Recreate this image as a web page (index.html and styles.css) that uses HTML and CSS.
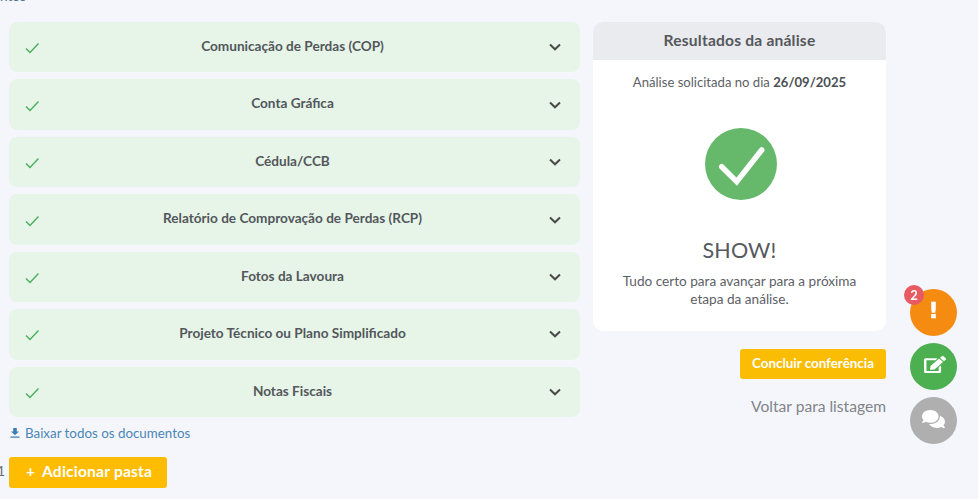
FILE: index.html
```html
<!DOCTYPE html>
<html lang="pt-BR">
<head>
<meta charset="utf-8">
<title>Resultados da análise</title>
<link rel="stylesheet" href="styles.css">
</head>
<body>
<p class="cut-text">ntos</p>
<main class="layout">
  <section class="docs">
    <div class="doc-list">
      <div class="doc-row"><svg class="tick" viewBox="0 0 14 12"><path d="M1 6.5 5 10.500 13.500 1.500"/></svg><span class="doc-name">Comunicação de Perdas (COP)</span><svg class="chev" viewBox="0 0 12 8"><path d="M1 1.500 6 6.300 11 1.500"/></svg></div>
      <div class="doc-row"><svg class="tick" viewBox="0 0 14 12"><path d="M1 6.5 5 10.500 13.500 1.500"/></svg><span class="doc-name">Conta Gráfica</span><svg class="chev" viewBox="0 0 12 8"><path d="M1 1.500 6 6.300 11 1.500"/></svg></div>
      <div class="doc-row"><svg class="tick" viewBox="0 0 14 12"><path d="M1 6.5 5 10.500 13.500 1.500"/></svg><span class="doc-name">Cédula/CCB</span><svg class="chev" viewBox="0 0 12 8"><path d="M1 1.500 6 6.300 11 1.500"/></svg></div>
      <div class="doc-row"><svg class="tick" viewBox="0 0 14 12"><path d="M1 6.5 5 10.500 13.500 1.500"/></svg><span class="doc-name">Relatório de Comprovação de Perdas (RCP)</span><svg class="chev" viewBox="0 0 12 8"><path d="M1 1.500 6 6.300 11 1.500"/></svg></div>
      <div class="doc-row"><svg class="tick" viewBox="0 0 14 12"><path d="M1 6.5 5 10.500 13.500 1.500"/></svg><span class="doc-name">Fotos da Lavoura</span><svg class="chev" viewBox="0 0 12 8"><path d="M1 1.500 6 6.300 11 1.500"/></svg></div>
      <div class="doc-row"><svg class="tick" viewBox="0 0 14 12"><path d="M1 6.5 5 10.500 13.500 1.500"/></svg><span class="doc-name">Projeto Técnico ou Plano Simplificado</span><svg class="chev" viewBox="0 0 12 8"><path d="M1 1.500 6 6.300 11 1.500"/></svg></div>
      <div class="doc-row"><svg class="tick" viewBox="0 0 14 12"><path d="M1 6.5 5 10.500 13.500 1.500"/></svg><span class="doc-name">Notas Fiscais</span><svg class="chev" viewBox="0 0 12 8"><path d="M1 1.500 6 6.300 11 1.500"/></svg></div>
    </div>
    <a class="download" href="#"><svg class="dl-icon" viewBox="0 0 10 10"><path d="M3.200 0H6.800V3.500H9L5 7.300 1 3.500H3.200ZM.500 8.500H9.500V9.800H.500Z"/></svg>Baixar todos os documentos</a>
    <div class="add-row"><span class="count">1</span><button class="add-btn"><span class="plus">+</span>Adicionar pasta</button></div>
  </section>
  <aside class="side">
    <div class="card">
      <h2 class="card-head">Resultados da análise</h2>
      <div class="card-body">
        <p class="req">Análise solicitada no dia <b>26/09/2025</b></p>
        <svg class="big-check" viewBox="0 0 72 72"><circle cx="36" cy="36" r="36"/><path d="M16.700 38.700 31.700 53.700 56.700 22"/></svg>
        <h3 class="show">SHOW!</h3>
        <p class="msg">Tudo certo para avançar para a próxima etapa da análise.</p>
      </div>
    </div>
    <button class="finish">Concluir conferência</button>
    <a class="back" href="#">Voltar para listagem</a>
  </aside>
</main>
<div class="fabs">
  <div class="fab fab-orange"><span class="badge">2</span><span class="bang">!</span></div>
  <div class="fab fab-green"><svg class="edit-icon" viewBox="0 0 576 512" preserveAspectRatio="none"><path d="M402.600 83.200l90.200 90.200c3.800 3.800 3.800 10 0 13.800L274.400 405.600l-92.800 10.300c-12.400 1.400-22.900-9.100-21.500-21.500l10.300-92.800L388.800 83.200c3.800-3.800 10-3.800 13.800 0zm162-22.900l-48.800-48.800c-15.200-15.200-39.900-15.200-55.200 0l-35.400 35.400c-3.800 3.800-3.800 10 0 13.800l90.200 90.200c3.800 3.800 10 3.800 13.800 0l35.400-35.400c15.200-15.300 15.200-40 0-55.200zM384 346.200V448H64V128h229.800c3.200 0 6.200-1.300 8.500-3.500l40-40c7.600-7.600 2.200-20.500-8.500-20.500H48C21.500 64 0 85.500 0 112v352c0 26.500 21.500 48 48 48h352c26.500 0 48-21.500 48-48V306.200c0-10.700-12.900-16-20.500-8.500l-40 40c-2.200 2.300-3.500 5.300-3.500 8.500z"/></svg></div>
  <div class="fab fab-grey"><svg class="chat-icon" viewBox="0 32 576 448"><path d="M416 192c0-88.400-93.100-160-208-160S0 103.600 0 192c0 34.300 14.100 65.900 38 92-13.400 30.200-35.500 54.200-35.800 54.500-2.200 2.300-2.800 5.700-1.500 8.700S4.800 352 8 352c36.600 0 66.900-12.300 88.700-25 32.200 15.700 70.300 25 111.300 25 114.900 0 208-71.600 208-160zm122 220c23.900-26 38-57.700 38-92 0-66.900-53.500-124.200-129.300-148.100.9 6.600 1.300 13.300 1.300 20.100 0 105.900-107.700 192-240 192-10.800 0-21.300-.8-31.700-1.900C207.800 439.600 281.800 480 368 480c41 0 79.100-9.200 111.300-25 21.800 12.700 52.100 25 88.700 25 3.200 0 6.100-1.900 7.300-4.800 1.300-2.900.7-6.300-1.500-8.700-.3-.3-22.400-24.200-35.800-54.500z"/></svg></div>
</div>
</body>
</html>
```
FILE: styles.css
```css
* { box-sizing: border-box; }
html, body { height: 100%; }
body {
  margin: 0;
  height: 499px;
  overflow: hidden;
  background: #f5f6fb;
  font-family: "Lato", "Open Sans", sans-serif;
  color: #4f5358;
}
.cut-text {
  position: absolute;
  top: -12px;
  left: 0;
  margin: 0;
  font-size: 13.500px;
  color: #4a6f8f;
}
.layout {
  display: flex;
  gap: 13px;
  padding: 22px 0 0 9px;
  align-items: flex-start;
}
.docs { width: 571px; }
.doc-list { display: flex; flex-direction: column; gap: 7px; }
.doc-row {
  display: flex;
  align-items: center;
  height: 50.45px;
  padding: 0 19px 0 16px;
  background: #e7f5e8;
  border-radius: 8px;
}
.tick { width: 14px; height: 12px; flex: none; margin-top: 2px; fill: none; stroke: #4caf60; stroke-width: 1.500; }
.chev { width: 12px; height: 8px; flex: none; fill: none; stroke: #4a4a4a; stroke-width: 2; }
.doc-name {
  flex: 1;
  text-align: center;
  font-size: 13.600px;
  font-weight: 700;
  color: #53575c;
  padding: 0 3px 2.500px 0;
}
.download {
  display: flex;
  align-items: center;
  gap: 5px;
  margin: 7.500px 0 0 1px;
  font-size: 13.350px;
  line-height: 17px;
  color: #4a86b8;
  text-decoration: none;
}
.dl-icon { width: 10px; height: 10px; fill: #3f7fb0; }
.add-row { position: relative; margin-top: 15px; }
.count { position: absolute; left: -12px; top: 5px; font-size: 14px; line-height: 17px; color: #6a6e73; }
.add-btn {
  display: flex;
  align-items: center;
  width: 158px;
  height: 31px;
  padding: 0 0 2px 17px;
  border: 0;
  border-radius: 3px;
  background: #ffbc00;
  color: #fff;
  font: 700 15.600px "Lato", sans-serif;
  letter-spacing: .2px;
}
.plus { width: 16px; text-align: left; }
.side { width: 293px; display: flex; flex-direction: column; align-items: flex-end; }
.card { width: 100%; height: 309px; background: #fff; border-radius: 10px; overflow: hidden; }
.card-head {
  margin: 0;
  height: 38px;
  background: #e9ebee;
  font-size: 15.600px;
  line-height: 37px;
  font-weight: 700;
  text-align: center;
  color: #55585c;
  letter-spacing: .2px;
}
.card-body { display: flex; flex-direction: column; align-items: center; padding: 13px 24px 0; }
.req { margin: 0; font-size: 13.100px; line-height: 18px; color: #5d6166; }
.req b { color: #4b4f54; }
.big-check { width: 72px; height: 72px; margin: 37px 0 0 2px; flex: none; }
.big-check circle { fill: #66b96b; }
.big-check path { fill: none; stroke: #fff; stroke-width: 5.500; stroke-linecap: round; stroke-linejoin: miter; }
.show { margin: 37px 0 0; font-size: 21.500px; line-height: 26px; font-weight: 400; color: #55595e; letter-spacing: .2px; }
.msg { margin: 9px -6px 0; font-size: 13.600px; line-height: 18px; text-align: center; color: #5d6166; }
.finish {
  margin-top: 18px;
  width: 146px;
  height: 30px;
  padding: 0 0 2px;
  border: 0;
  border-radius: 3px;
  background: #fbbc04;
  color: #fff;
  font: 700 13.400px "Lato", sans-serif;
}
.back {
  margin-top: 18px;
  font-size: 15.600px;
  line-height: 18px;
  color: #80848a;
  text-decoration: none;
}
.fabs {
  position: fixed;
  left: 910px;
  top: 289px;
  display: flex;
  flex-direction: column;
  gap: 7px;
}
.fab {
  position: relative;
  width: 47px;
  height: 47px;
  border-radius: 50%;
  display: flex;
  align-items: center;
  justify-content: center;
}
.fab-orange { background: #f68b11; }
.fab-green { background: #4caf50; }
.fab-grey { background: #afafaf; }
.bang { color: #fff; font: 700 22px/1 "DejaVu Sans", sans-serif; margin-bottom: 4px; -webkit-text-stroke: .6px #fff; }
.badge {
  position: absolute;
  left: -6px;
  top: -4px;
  width: 20px;
  height: 20px;
  border-radius: 50%;
  background: #e85a62;
  color: #fff;
  font-size: 13px;
  font-weight: 700;
  line-height: 20px;
  text-align: center;
}
.edit-icon { width: 22px; height: 17px; margin: 0 0 5px 3px; fill: #fff; }
.chat-icon { width: 23px; height: 18px; margin-bottom: 3px; fill: #fff; }
```
